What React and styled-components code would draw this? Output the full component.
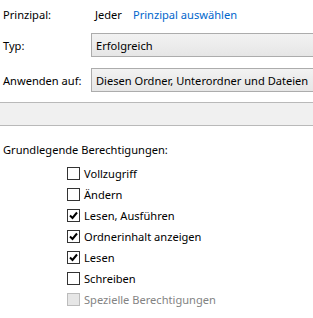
import React from 'react';
import styled, { createGlobalStyle } from 'styled-components';

const GlobalStyle = createGlobalStyle`
  html, body {
    margin: 0;
    padding: 0;
    background: #ffffff;
  }

  body {
    font-family: "Noto Sans", "Open Sans", sans-serif;
    font-size: 11.1px;
    color: #000000;
    overflow: hidden;
  }
`;

const StyledPanel = styled.div`
  width: 313px;
  height: 318px;
  padding-top: 6px;
  box-sizing: border-box;
  overflow: hidden;
`;

const Row = styled.div`
  display: flex;
  align-items: center;
  padding-left: 3px;
  margin-top: ${(props) => props.gap || 0}px;
  height: ${(props) => props.height || 16}px;
`;

const Label = styled.span`
  width: 88px;
  flex-shrink: 0;
  white-space: nowrap;
`;

const Value = styled.span`
  padding-left: 4px;
  white-space: nowrap;
`;

const Link = styled.span`
  color: #0066cc;
  margin-left: 11px;
  white-space: nowrap;
`;

const Combo = styled.div`
  flex: 1;
  height: 24px;
  box-sizing: border-box;
  display: flex;
  align-items: center;
  padding-left: 4px;
  margin-right: -20px;
  border: 1px solid #acacac;
  background: linear-gradient(#f2f2f2, #e6e6e6);
  white-space: nowrap;
`;

const Band = styled.div`
  height: 24px;
  margin-top: 10px;
  box-sizing: border-box;
  border-top: 1px solid #b9b9b9;
  border-bottom: 1px solid #b9b9b9;
  background: #f0f0f0;
`;

const Heading = styled.div`
  margin-top: 16px;
  padding-left: 3px;
  height: 16px;
  line-height: 16px;
  white-space: nowrap;
`;

const List = styled.ul`
  list-style: none;
  margin: 5px 0 0;
  padding: 0 0 0 67px;
`;

const Item = styled.li`
  display: flex;
  align-items: center;
  height: 21px;
  color: ${(props) => (props.disabled ? '#838383' : '#000000')};
  white-space: nowrap;
`;

const Box = styled.span`
  width: 13px;
  height: 13px;
  box-sizing: border-box;
  margin-right: 4px;
  border: 1px solid ${(props) => (props.disabled ? '#bcbcbc' : '#333333')};
  background: ${(props) => (props.disabled ? '#e6e6e6' : '#ffffff')};
  display: flex;
  align-items: center;
  justify-content: center;
`;

const permissions = [
  { name: 'Vollzugriff', checked: false },
  { name: 'Ändern', checked: false },
  { name: 'Lesen, Ausführen', checked: true },
  { name: 'Ordnerinhalt anzeigen', checked: true },
  { name: 'Lesen', checked: true },
  { name: 'Schreiben', checked: false },
  { name: 'Spezielle Berechtigungen', checked: false, disabled: true },
];

function Check() {
  return (
    <svg width="9" height="9" viewBox="0 0 9 9">
      <path d="M1 4.5 L3.5 7 L8 1.5" fill="none" stroke="#000" strokeWidth="2" />
    </svg>
  );
}

function App() {
  return (
    <StyledPanel>
      <GlobalStyle />
      <Row>
        <Label>Prinzipal:</Label>
        <Value>Jeder</Value>
        <Link>Prinzipal auswählen</Link>
      </Row>
      <Row gap={11} height={24}>
        <Label>Typ:</Label>
        <Combo>Erfolgreich</Combo>
      </Row>
      <Row gap={11} height={24}>
        <Label>Anwenden auf:</Label>
        <Combo>Diesen Ordner, Unterordner und Dateien</Combo>
      </Row>
      <Band />
      <Heading>Grundlegende Berechtigungen:</Heading>
      <List>
        {permissions.map((item) => (
          <Item key={item.name} disabled={item.disabled}>
            <Box disabled={item.disabled}>{item.checked && <Check />}</Box>
            {item.name}
          </Item>
        ))}
      </List>
    </StyledPanel>
  );
}

export default App;
